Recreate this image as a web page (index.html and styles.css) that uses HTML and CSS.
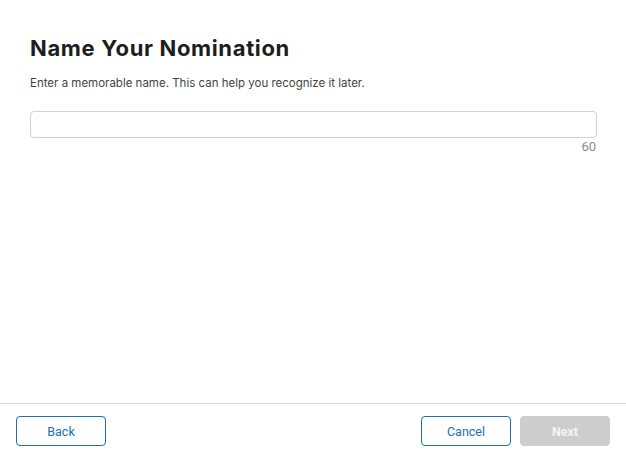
FILE: index.html
```html
<!DOCTYPE html>
<html>
<head>
<meta charset="utf-8">
<link rel="stylesheet" href="styles.css">
</head>
<body>
<div class="page">
  <main class="content">
    <h1 class="title">Name Your Nomination</h1>
    <p class="subtitle">Enter a memorable name. This can help you recognize it later.</p>
    <div class="field">
      <input class="input" type="text">
      <div class="counter">60</div>
    </div>
  </main>
  <footer class="footer">
    <button class="btn btn-outline">Back</button>
    <div class="right">
      <button class="btn btn-outline">Cancel</button>
      <button class="btn btn-disabled">Next</button>
    </div>
  </footer>
</div>
</body>
</html>
```
FILE: styles.css
```css
html, body {
  margin: 0;
  padding: 0;
  background: #fff;
}
.page {
  width: 626px;
  height: 457px;
  display: flex;
  flex-direction: column;
  font-family: "Inter", "Liberation Sans", sans-serif;
}
.content {
  flex: 1;
  padding: 35px 29px 0 30px;
}
.title {
  margin: 0;
  font-size: 22px;
  font-weight: 700;
  letter-spacing: 0.65px;
  color: #1d1d1f;
  line-height: 26px;
}
.subtitle {
  margin: 14px 0 0;
  font-size: 11.5px;
  color: #444;
  line-height: 16px;
}
.field {
  margin-top: 20px;
}
.input {
  display: block;
  box-sizing: border-box;
  width: 567px;
  height: 27px;
  border: 1px solid #d2d2d2;
  border-radius: 4px;
  margin: 0;
  outline: none;
}
.counter {
  width: 567px;
  text-align: right;
  font-family: "Roboto", sans-serif;
  font-size: 13px;
  color: #8a8a8a;
  margin-top: 2px;
  line-height: 14px;
  padding-right: 1px;
  box-sizing: border-box;
}
.footer {
  border-top: 1px solid #d8d8d8;
  height: 54px;
  box-sizing: border-box;
  padding: 12px 16px 0;
  display: flex;
  justify-content: space-between;
  align-items: flex-start;
}
.right {
  display: flex;
  gap: 9px;
}
.btn {
  width: 90px;
  height: 30px;
  box-sizing: border-box;
  border-radius: 4px;
  font-family: "Roboto", sans-serif;
  font-size: 12.5px;
  font-weight: 400;
  padding: 0;
  cursor: pointer;
}
.btn-outline {
  background: #fff;
  border: 1px solid #1f6fb2;
  color: #1a6fb6;
}
.btn-disabled {
  background: #cdcdcd;
  border: 1px solid #cdcdcd;
  color: #f4f4f4;
  font-weight: 700;
}
```
